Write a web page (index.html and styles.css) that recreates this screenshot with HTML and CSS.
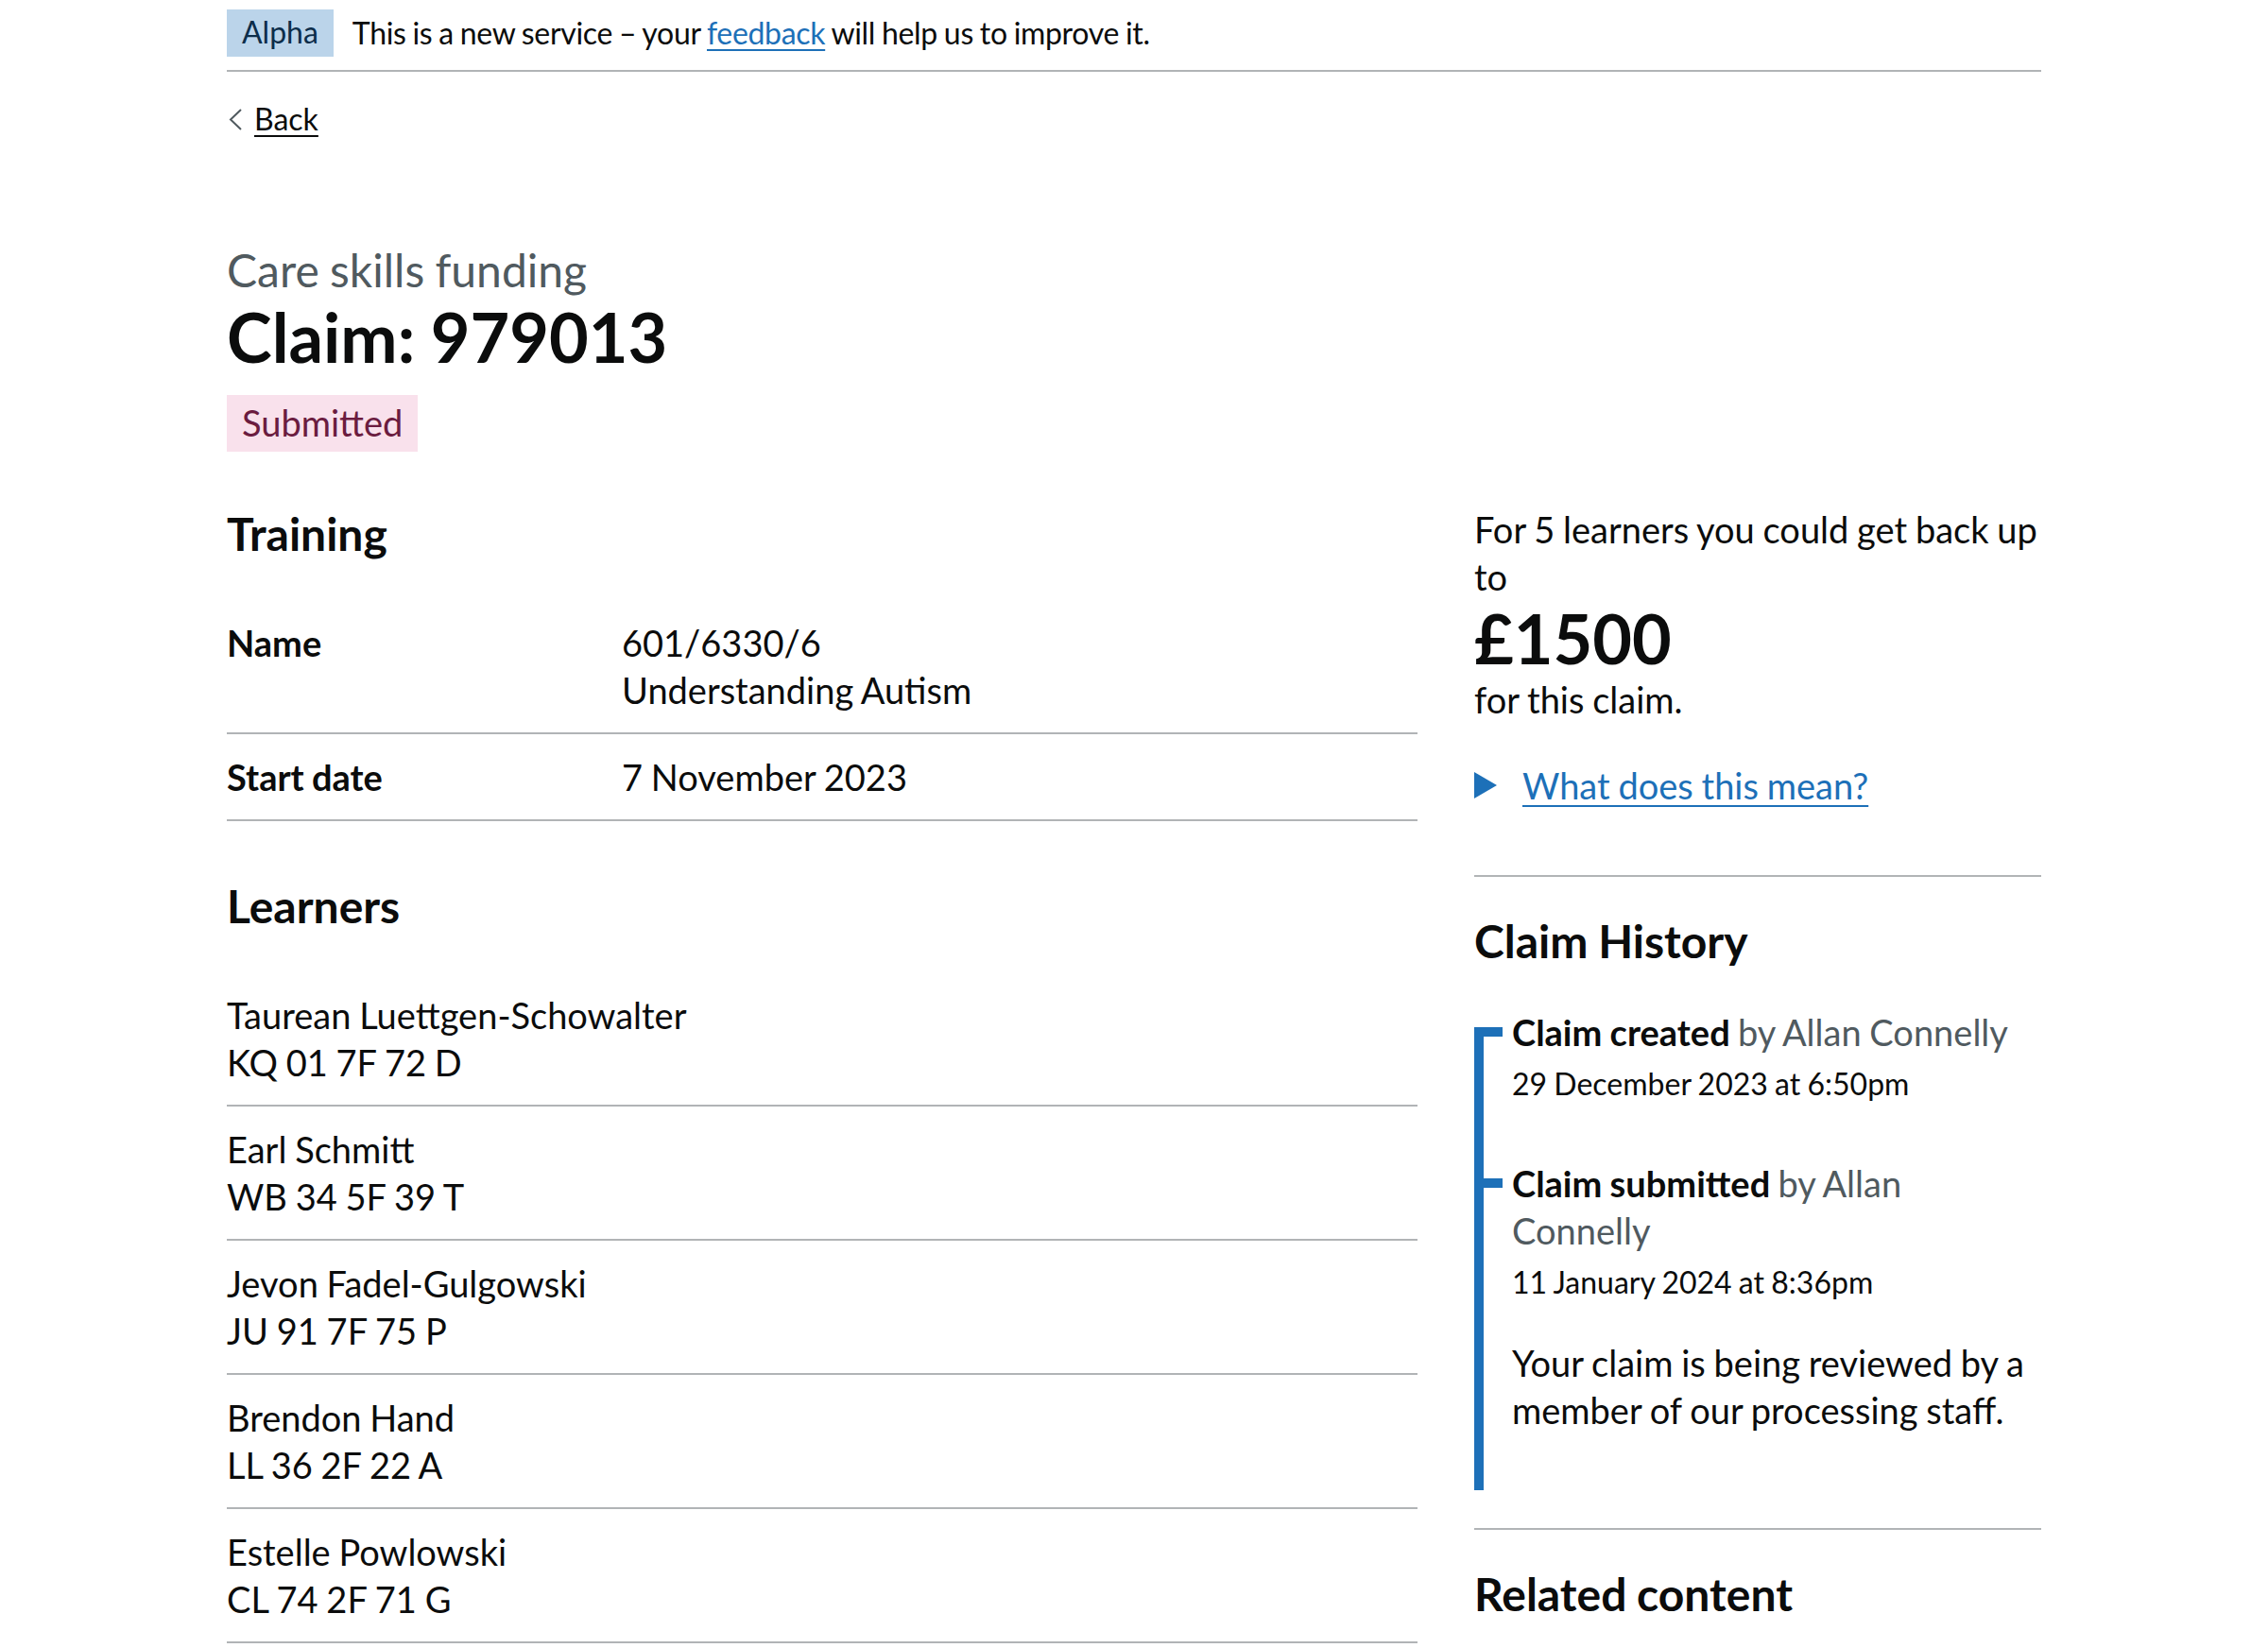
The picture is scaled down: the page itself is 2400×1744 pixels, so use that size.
FILE: index.html
```html
<!DOCTYPE html>
<html lang="en">
<head>
<meta charset="utf-8">
<title>Claim: 979013 – Care skills funding</title>
<link rel="stylesheet" href="styles.css">
</head>
<body>
<div class="width-container">
  <div class="phase-banner">
    <p class="phase-banner__content">
      <strong class="tag tag--blue">Alpha</strong>
      <span class="phase-banner__text">This is a new service – your <a class="link" href="#">feedback</a> will help us to improve it.</span>
    </p>
  </div>

  <a href="#" class="back-link">
    <svg class="back-link__chevron" viewBox="0 0 16 24" aria-hidden="true"><polyline points="13,2 2,12.5 13,23" fill="none" stroke="#505a5f" stroke-width="2"/></svg>
    <span class="back-link__text">Back</span>
  </a>

  <main class="main-wrapper">
    <span class="caption-l">Care skills funding</span>
    <h1 class="heading-l">Claim: 979013</h1>
    <strong class="tag tag--pink">Submitted</strong>

    <div class="grid-row">
      <div class="column-two-thirds">
        <h2 class="heading-m">Training</h2>
        <dl class="summary-list">
          <div class="summary-list__row">
            <dt class="summary-list__key">Name</dt>
            <dd class="summary-list__value">601/6330/6<br>Understanding Autism</dd>
          </div>
          <div class="summary-list__row">
            <dt class="summary-list__key">Start date</dt>
            <dd class="summary-list__value">7 November 2023</dd>
          </div>
        </dl>

        <h2 class="heading-m">Learners</h2>
        <ul class="learner-list">
          <li class="learner-list__item">Taurean Luettgen-Schowalter<br>KQ 01 7F 72 D</li>
          <li class="learner-list__item">Earl Schmitt<br>WB 34 5F 39 T</li>
          <li class="learner-list__item">Jevon Fadel-Gulgowski<br>JU 91 7F 75 P</li>
          <li class="learner-list__item">Brendon Hand<br>LL 36 2F 22 A</li>
          <li class="learner-list__item">Estelle Powlowski<br>CL 74 2F 71 G</li>
        </ul>
      </div>

      <div class="column-one-third">
        <p class="body body--flush">For 5 learners you could get back up to</p>
        <p class="amount">£1500</p>
        <p class="body">for this claim.</p>

        <details class="details">
          <summary class="details__summary">
            <svg class="details__marker" viewBox="0 0 24 28" aria-hidden="true"><polygon points="0,0 24,14 0,28" fill="#1d70b8"/></svg>
            <span class="details__summary-text">What does this mean?</span>
          </summary>
          <div class="details__text">The amount you could get back depends on the number of learners and the training they complete.</div>
        </details>

        <hr class="section-break">

        <h2 class="heading-m heading-m--tight">Claim History</h2>
        <div class="timeline">
          <div class="timeline__item">
            <h3 class="timeline__title">Claim created <span class="timeline__byline">by Allan Connelly</span></h3>
            <p class="timeline__date">29 December 2023 at 6:50pm</p>
          </div>
          <div class="timeline__item">
            <h3 class="timeline__title">Claim submitted <span class="timeline__byline">by Allan Connelly</span></h3>
            <p class="timeline__date">11 January 2024 at 8:36pm</p>
            <p class="timeline__description">Your claim is being reviewed by a member of our processing staff.</p>
          </div>
        </div>

        <hr class="section-break">

        <h2 class="heading-m">Related content</h2>
      </div>
    </div>
  </main>
</div>
</body>
</html>
```

FILE: styles.css
```css
html, body {
  margin: 0;
  padding: 0;
  background: #ffffff;
}

body {
  font-family: Lato, "Liberation Sans", Arial, sans-serif;
  color: #0b0c0c;
  word-spacing: -0.06em;
  -webkit-font-smoothing: antialiased;
}

.width-container {
  max-width: 1920px;
  margin: 0 auto;
}

/* Phase banner */
.phase-banner {
  padding: 10px 0 14px;
  border-bottom: 2px solid #b1b4b6;
}

.phase-banner__content {
  display: flex;
  align-items: center;
  margin: 0;
}

.phase-banner__text {
  font-size: 32px;
  line-height: 40px;
  letter-spacing: -0.01em;
}

.tag {
  display: inline-block;
  padding: 4px 16px 6px;
  font-weight: 400;
}

.tag--blue {
  background: #bbd4ea;
  color: #0c2d4a;
  font-size: 32px;
  line-height: 38px;
  padding: 5px 16px 7px;
  margin-right: 20px;
}

.tag--pink {
  display: block;
  width: fit-content;
  background: #f9e1ec;
  color: #6b1c40;
  font-size: 38px;
  line-height: 50px;
  margin-bottom: 57px;
}

.link {
  color: #1d70b8;
  text-decoration: underline;
  text-decoration-thickness: 2px;
  text-underline-offset: 0.16em;
}

/* Back link */
.back-link {
  display: flex;
  align-items: center;
  width: fit-content;
  margin: 30px 0;
  font-size: 32px;
  line-height: 40px;
  color: #0b0c0c;
  text-decoration: none;
}

.back-link__chevron {
  width: 16px;
  height: 24px;
  margin: 0 11px 0 2px;
}

.back-link__text {
  text-decoration: underline;
  text-decoration-thickness: 2px;
  text-underline-offset: 0.16em;
}

/* Main */
.main-wrapper {
  display: block;
  padding-top: 80px;
}

.caption-l {
  display: block;
  font-size: 48px;
  line-height: 60px;
  color: #505a5f;
}

.heading-l {
  margin: 0 0 22px;
  font-size: 72px;
  line-height: 80px;
  font-weight: 700;
}

.heading-m {
  margin: 0 0 40px;
  font-size: 48px;
  line-height: 60px;
  font-weight: 700;
}

.heading-m--tight {
  margin-bottom: 41px;
}

.grid-row {
  display: grid;
  grid-template-columns: 1260px 600px;
  column-gap: 60px;
}

/* Summary list */
.summary-list {
  margin: 0 0 60px;
  font-size: 38px;
  line-height: 50px;
}

.summary-list__row {
  display: flex;
  border-bottom: 2px solid #b1b4b6;
}

.summary-list__key {
  flex: 0 0 418px;
  box-sizing: border-box;
  padding: 20px 40px 20px 0;
  font-weight: 700;
}

.summary-list__value {
  flex: 1;
  margin: 0;
  padding: 20px 0;
}

/* Learners */
.learner-list {
  list-style: none;
  margin: 0;
  padding: 0;
  font-size: 38px;
  line-height: 50px;
}

.learner-list__item {
  padding: 20px 0;
  border-bottom: 2px solid #b1b4b6;
}

/* Right column */
.body {
  margin: 0 0 40px;
  font-size: 38px;
  line-height: 50px;
}

.body--flush {
  margin-bottom: 0;
}

.amount {
  margin: 0;
  font-size: 72px;
  line-height: 80px;
  font-weight: 700;
}

.details {
  margin-bottom: 60px;
  font-size: 38px;
  line-height: 50px;
}

.details__summary {
  display: inline-flex;
  align-items: center;
  margin-bottom: 10px;
  color: #1d70b8;
  cursor: pointer;
  list-style: none;
}

.details__summary::-webkit-details-marker {
  display: none;
}

.details__marker {
  width: 24px;
  height: 28px;
  margin-right: 27px;
  flex: none;
}

.details__summary-text {
  text-decoration: underline;
  text-decoration-thickness: 2px;
  text-underline-offset: 0.16em;
}

.section-break {
  margin: 0 0 38px;
  border: 0;
  border-top: 2px solid #b1b4b6;
  height: 0;
}

/* Timeline */
.timeline {
  position: relative;
  margin-bottom: 40px;
}

.timeline::before {
  content: "";
  position: absolute;
  left: 0;
  top: 20px;
  bottom: 0;
  width: 10px;
  background: #1d70b8;
}

.timeline__item {
  position: relative;
  padding: 0 0 60px 40px;
}

.timeline__item::before {
  content: "";
  position: absolute;
  left: 0;
  top: 20px;
  width: 30px;
  height: 10px;
  background: #1d70b8;
}

.timeline__title {
  margin: 0;
  padding-right: 12px;
  font-size: 38px;
  line-height: 50px;
  font-weight: 700;
}

.timeline__byline {
  font-weight: 400;
  color: #505a5f;
}

.timeline__date {
  margin: 10px 0 0;
  font-size: 32px;
  line-height: 40px;
}

.timeline__description {
  margin: 40px 0 0;
  font-size: 38px;
  line-height: 50px;
}
```
